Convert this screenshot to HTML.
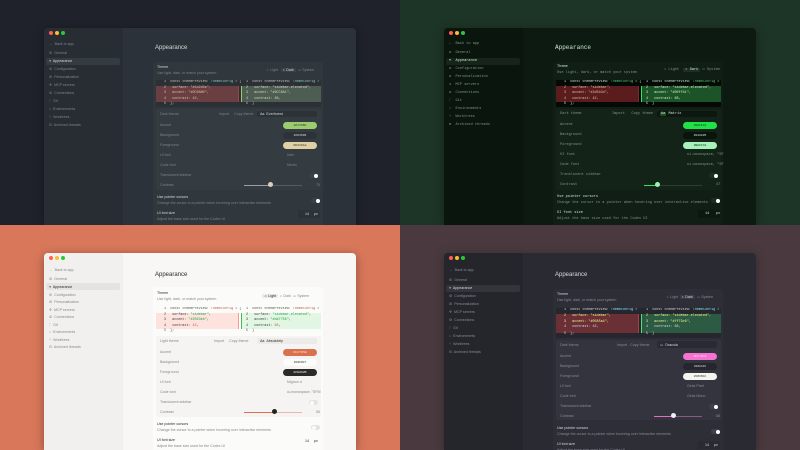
<!DOCTYPE html>
<html><head><meta charset="utf-8"><style>
*{margin:0;padding:0;box-sizing:border-box}
html,body{width:800px;height:450px;overflow:hidden}
body{font-family:"Liberation Sans",sans-serif;position:relative}
.q{position:absolute;width:400px;height:225px;overflow:hidden}
.w{position:absolute;left:44px;top:28px;width:312px;height:197px;border-radius:4px 4px 0 0;background:var(--main);box-shadow:0 2px 10px rgba(0,0,0,.35);overflow:hidden;color:var(--tx);font-size:3.6px}
.sb{position:absolute;left:0;top:0;width:79px;height:100%;background:var(--side)}
.dot{position:absolute;top:3px;width:4px;height:4px;border-radius:50%}
.t{position:absolute;white-space:nowrap;line-height:5px}
.m{color:var(--mu)}
.act{position:absolute;left:2px;top:30px;width:74px;height:7px;border-radius:2px;background:var(--act)}
.card{position:absolute;left:109px;top:34px;width:170px;height:200px;border-radius:3px;background:var(--card)}
.diff{position:absolute;left:112px;top:52px;width:165px;height:27px;background:var(--code);font-family:"Liberation Mono",monospace;font-size:3.4px;overflow:hidden}
.red{position:absolute;left:0;top:5.5px;width:83px;height:16px;background:var(--red);border-right:1px solid var(--redb)}
.grn{position:absolute;left:85px;top:5.5px;width:80px;height:16px;background:var(--grn);border-left:1px solid var(--grnb)}
.inner{position:absolute;left:112px;top:81px;width:165px;height:81px;border-radius:2px;background:var(--inner)}
.sw{position:absolute;left:239px;width:34px;height:7px;border-radius:3.5px;font-size:3px;text-align:center;line-height:7px}
.sel{position:absolute;left:213px;top:83px;width:60px;height:6px;border-radius:2px;background:var(--selbg)}
.tg{position:absolute;width:9px;height:5px;border-radius:3px;background:var(--tgbg)}
.tg i{position:absolute;right:.5px;top:.5px;width:4px;height:4px;border-radius:50%;background:var(--knob)}
.sl{position:absolute;left:200px;top:156.5px;width:58px;height:1px;background:var(--slbg)}
.sl i{position:absolute;left:0;top:0;height:1px;width:var(--slw);background:var(--slf)}
.sl b{position:absolute;left:var(--slw);top:-2.5px;width:5px;height:5px;border-radius:50%;background:var(--knob2);margin-left:-2.5px}
.inp{position:absolute;left:254px;top:182px;width:22px;height:8px;border-radius:2px;background:var(--selbg)}
</style></head><body>

<!-- TL -->
<div class="q" style="left:0;top:0;background:#1f222a;--main:#2c3239;--side:#282d33;--tx:#d6d8d4;--mu:#7d8488;--act:#343b41;--card:#30373d;--code:#2a3035;--red:#6a3f42;--redb:#8a4a4e;--grn:#4d5d52;--grnb:#9ccc70;--inner:#343b41;--selbg:#2c3237;--tgbg:#3a4147;--knob:#fff;--knob2:#d8d2b8;--slbg:#555c60;--slf:#9aa0a0;--slw:26px">
<div class="w">
<div class="sb"></div>
<div class="dot" style="left:5px;background:#ff5f57"></div><div class="dot" style="left:11px;background:#febc2e"></div><div class="dot" style="left:17px;background:#28c840"></div>
<div class="act"></div>
<div class="t m" style="left:5px;top:13.5px">←&nbsp; Back to app</div>
<div class="t m" style="left:5px;top:22.5px">⚙&nbsp; General</div>
<div class="t" style="left:5px;top:30.5px">≡&nbsp; Appearance</div>
<div class="t m" style="left:5px;top:38.5px">⚙&nbsp; Configuration</div>
<div class="t m" style="left:5px;top:46.5px">⚙&nbsp; Personalization</div>
<div class="t m" style="left:5px;top:54.5px">✣&nbsp; MCP servers</div>
<div class="t m" style="left:5px;top:62.5px">⚙&nbsp; Connections</div>
<div class="t m" style="left:5px;top:70.5px">ᚴ&nbsp; Git</div>
<div class="t m" style="left:5px;top:78.5px">○&nbsp; Environments</div>
<div class="t m" style="left:5px;top:86.5px">⑂&nbsp; Worktrees</div>
<div class="t m" style="left:5px;top:94.5px">⊟&nbsp; Archived threads</div>
<div class="t" style="left:111px;top:16px;font-size:6px;line-height:8px">Appearance</div>
<div class="card"></div>
<div class="t" style="left:113px;top:36.5px">Theme</div>
<div class="t m" style="left:113px;top:42.5px">Use light, dark, or match your system</div>
<div class="t m" style="left:222px;top:39.5px">☼ Light &nbsp;&nbsp;<span style="color:#d6d8d4;background:#3a4147;padding:0 2px">◐ Dark</span> &nbsp;▭ System</div>
<div class="diff"><div class="red"></div><div class="grn"></div>
<div class="t" style="left:8px;top:0;color:#c9c3b0">1 &nbsp;const themePreview: <span style="color:#8fc9b8">ThemeConfig</span> = {</div>
<div class="t" style="left:8px;top:5.5px;color:#d8c0a0">2 &nbsp;&nbsp;surface: "#1d2d3e",</div>
<div class="t" style="left:8px;top:11px;color:#d8c0a0">3 &nbsp;&nbsp;accent: "#0C6AB0",</div>
<div class="t" style="left:8px;top:16.5px;color:#d8c0a0">4 &nbsp;&nbsp;contrast: 42,</div>
<div class="t" style="left:8px;top:22px;color:#c9c3b0">5 &nbsp;};</div>
<div class="t" style="left:90px;top:0;color:#c9c3b0">1 &nbsp;const themePreview: <span style="color:#8fc9b8">ThemeConfig</span> = {</div>
<div class="t" style="left:90px;top:5.5px;color:#d8d6c0">2 &nbsp;&nbsp;surface: "sidebar-elevated",</div>
<div class="t" style="left:90px;top:11px;color:#d8d6c0">3 &nbsp;&nbsp;accent: "#9CC6A1",</div>
<div class="t" style="left:90px;top:16.5px;color:#d8d6c0">4 &nbsp;&nbsp;contrast: 68,</div>
<div class="t" style="left:90px;top:22px;color:#c9c3b0">5 &nbsp;}</div>
</div>
<div class="inner"></div>
<div class="sel"></div>
<div class="t m" style="left:116px;top:83.5px">Dark theme</div>
<div class="t m" style="left:175px;top:83.5px">Import &nbsp;&nbsp;&nbsp; Copy theme</div>
<div class="t" style="left:216px;top:83.5px">Aa &nbsp;Everforest</div>
<div class="t m" style="left:116px;top:94.5px">Accent</div><div class="sw" style="top:94px;background:#9ccc70;color:#2c3a20">#A7C080</div>
<div class="t m" style="left:116px;top:104.5px">Background</div><div class="sw" style="top:104px;background:#2c3237;color:#d6d8d4">#2D353B</div>
<div class="t m" style="left:116px;top:114.5px">Foreground</div><div class="sw" style="top:114px;background:#e0d0a6;color:#3a3428">#D3C6AA</div>
<div class="t m" style="left:116px;top:124.5px">UI font</div><div class="t m" style="left:243px;top:124.5px">Inter</div>
<div class="t m" style="left:116px;top:134.5px">Code font</div><div class="t m" style="left:243px;top:134.5px">Menlo</div>
<div class="t m" style="left:116px;top:144.5px">Translucent sidebar</div><div class="tg" style="left:265px;top:145px"><i></i></div>
<div class="t m" style="left:116px;top:154.5px">Contrast</div><div class="sl"><i></i><b></b></div><div class="t m" style="left:272px;top:154.5px">75</div>
<div class="t" style="left:113px;top:166.5px">Use pointer cursors</div>
<div class="t m" style="left:113px;top:172.5px">Change the cursor to a pointer when hovering over interactive elements</div>
<div class="tg" style="left:267px;top:170px"><i></i></div>
<div class="t" style="left:113px;top:182.5px">UI font size</div>
<div class="t m" style="left:113px;top:188.5px">Adjust the base size used for the Codex UI</div>
<div class="inp"></div><div class="t" style="left:261px;top:183.5px">14 &nbsp;&nbsp;&nbsp; px</div>
</div></div>

<!-- TR -->
<div class="q" style="left:400px;top:0;background:#1d3526;--main:#0d1a11;--side:#0a150d;--tx:#c8e8cc;--mu:#7a9a80;--act:#16241a;--card:#111e15;--code:#050a06;--red:#5a1c1c;--redb:#7a2a2a;--grn:#1c5428;--grnb:#2ee860;--inner:#142318;--selbg:#0c1710;--tgbg:#1d2e22;--knob:#fff;--knob2:#9ef0b0;--slbg:#2a4030;--slf:#2ee860;--slw:13px;font-family:'Liberation Mono',monospace">
<div class="w" style="font-family:'Liberation Mono',monospace">
<div class="sb"></div>
<div class="dot" style="left:5px;background:#ff5f57"></div><div class="dot" style="left:11px;background:#febc2e"></div><div class="dot" style="left:17px;background:#28c840"></div>
<div class="act"></div>
<div class="t m" style="left:5px;top:13.5px">←&nbsp; Back to app</div>
<div class="t m" style="left:5px;top:22.5px">⚙&nbsp; General</div>
<div class="t" style="left:5px;top:30.5px">≡&nbsp; Appearance</div>
<div class="t m" style="left:5px;top:38.5px">⚙&nbsp; Configuration</div>
<div class="t m" style="left:5px;top:46.5px">⚙&nbsp; Personalization</div>
<div class="t m" style="left:5px;top:54.5px">✣&nbsp; MCP servers</div>
<div class="t m" style="left:5px;top:62.5px">⚙&nbsp; Connections</div>
<div class="t m" style="left:5px;top:70.5px">ᚴ&nbsp; Git</div>
<div class="t m" style="left:5px;top:78.5px">○&nbsp; Environments</div>
<div class="t m" style="left:5px;top:86.5px">⑂&nbsp; Worktrees</div>
<div class="t m" style="left:5px;top:94.5px">⊟&nbsp; Archived threads</div>
<div class="t" style="left:111px;top:16px;font-size:6px;line-height:8px">Appearance</div>
<div class="card"></div>
<div class="t" style="left:113px;top:36.5px">Theme</div>
<div class="t m" style="left:113px;top:42.5px">Use light, dark, or match your system</div>
<div class="t m" style="left:220px;top:39.5px">☼ Light &nbsp;<span style="color:#c8e8cc;background:#1d2e22;padding:0 2px">◐ Dark</span> ▭ System</div>
<div class="diff"><div class="red"></div><div class="grn"></div>
<div class="t" style="left:8px;top:0;color:#c8e8cc">1 &nbsp;const themePreview: <span style="color:#5ad070">ThemeConfig</span> = {</div>
<div class="t" style="left:8px;top:5.5px;color:#e0c0a0">2 &nbsp;&nbsp;surface: "sidebar",</div>
<div class="t" style="left:8px;top:11px;color:#e0c0a0">3 &nbsp;&nbsp;accent: "#2d5b3d",</div>
<div class="t" style="left:8px;top:16.5px;color:#e0c0a0">4 &nbsp;&nbsp;contrast: 42,</div>
<div class="t" style="left:8px;top:22px;color:#c8e8cc">5 &nbsp;};</div>
<div class="t" style="left:90px;top:0;color:#c8e8cc">1 &nbsp;const themePreview: <span style="color:#5ad070">ThemeConfig</span> = {</div>
<div class="t" style="left:90px;top:5.5px;color:#d0f0d0">2 &nbsp;&nbsp;surface: "sidebar-elevated",</div>
<div class="t" style="left:90px;top:11px;color:#d0f0d0">3 &nbsp;&nbsp;accent: "#00ff41",</div>
<div class="t" style="left:90px;top:16.5px;color:#d0f0d0">4 &nbsp;&nbsp;contrast: 68,</div>
<div class="t" style="left:90px;top:22px;color:#c8e8cc">5 &nbsp;}</div>
</div>
<div class="inner"></div>
<div class="sel"></div>
<div class="t m" style="left:116px;top:83.5px">Dark theme</div>
<div class="t m" style="left:168px;top:83.5px">Import &nbsp;&nbsp;Copy theme</div>
<div class="t" style="left:216px;top:83.5px"><span style="background:#1d4a28;padding:0 1px">Aa</span> Matrix</div>
<div class="t m" style="left:116px;top:94.5px">Accent</div><div class="sw" style="top:94px;background:#22e04a;color:#064012">#00FF41</div>
<div class="t m" style="left:116px;top:104.5px">Background</div><div class="sw" style="top:104px;background:#0a140c;color:#c8e8cc">#040805</div>
<div class="t m" style="left:116px;top:114.5px">Foreground</div><div class="sw" style="top:114px;background:#a8f0bc;color:#0a3016">#B8FFC8</div>
<div class="t m" style="left:116px;top:124.5px">UI font</div><div class="t m" style="left:243px;top:124.5px">ui-monospace, "SF</div>
<div class="t m" style="left:116px;top:134.5px">Code font</div><div class="t m" style="left:243px;top:134.5px">ui-monospace, "SF</div>
<div class="t m" style="left:116px;top:144.5px">Translucent sidebar</div><div class="tg" style="left:265px;top:145px"><i></i></div>
<div class="t m" style="left:116px;top:154.5px">Contrast</div><div class="sl"><i></i><b></b></div><div class="t m" style="left:272px;top:154.5px">47</div>
<div class="t" style="left:113px;top:166.5px">Use pointer cursors</div>
<div class="t m" style="left:113px;top:172.5px">Change the cursor to a pointer when hovering over interactive elements</div>
<div class="tg" style="left:267px;top:170px"><i></i></div>
<div class="t" style="left:113px;top:182.5px">UI font size</div>
<div class="t m" style="left:113px;top:188.5px">Adjust the base size used for the Codex UI</div>
<div class="inp"></div><div class="t" style="left:261px;top:183.5px">14 &nbsp;&nbsp;px</div>
</div></div>

<!-- BL -->
<div class="q" style="left:0;top:225px;background:#d9775a;--main:#f8f7f5;--side:#f1f0ee;--tx:#2a2a2a;--mu:#8a8784;--act:#e4e3e1;--card:#fbfbfa;--code:#fbfbfa;--red:#fde2dd;--redb:#f0a090;--grn:#e2f6e4;--grnb:#40b860;--inner:#f5f4f2;--selbg:#ecebe9;--tgbg:#e4e3e1;--knob:#fbfbfa;--knob2:#222;--slbg:#e8b8a8;--slf:#d9714f;--slw:30px">
<div class="w">
<div class="sb"></div>
<div class="dot" style="left:5px;background:#ff5f57"></div><div class="dot" style="left:11px;background:#febc2e"></div><div class="dot" style="left:17px;background:#28c840"></div>
<div class="act"></div>
<div class="t m" style="left:5px;top:15px">←&nbsp; Back to app</div>
<div class="t m" style="left:5px;top:24px">⚙&nbsp; General</div>
<div class="t" style="left:5px;top:32px">≡&nbsp; Appearance</div>
<div class="t m" style="left:5px;top:39.5px">⚙&nbsp; Configuration</div>
<div class="t m" style="left:5px;top:47px">⚙&nbsp; Personalization</div>
<div class="t m" style="left:5px;top:54.5px">✣&nbsp; MCP servers</div>
<div class="t m" style="left:5px;top:62px">⚙&nbsp; Connections</div>
<div class="t m" style="left:5px;top:69.5px">ᚴ&nbsp; Git</div>
<div class="t m" style="left:5px;top:77px">○&nbsp; Environments</div>
<div class="t m" style="left:5px;top:84.5px">⑂&nbsp; Worktrees</div>
<div class="t m" style="left:5px;top:92px">⊟&nbsp; Archived threads</div>
<div class="t" style="left:111px;top:18px;font-size:6px;line-height:8px">Appearance</div>
<div class="card"></div>
<div class="t" style="left:113px;top:38px">Theme</div>
<div class="t m" style="left:113px;top:44px">Use light, dark, or match your system</div>
<div class="t m" style="left:218px;top:41px"><span style="color:#2a2a2a;background:#ecebe9;padding:0 2px">☼ Light</span> &nbsp;◐ Dark &nbsp;▭ System</div>
<div class="diff" style="top:54px"><div class="red"></div><div class="grn"></div>
<div class="t" style="left:8px;top:0;color:#555">1 &nbsp;const themePreview: <span style="color:#c06048">ThemeConfig</span> = {</div>
<div class="t" style="left:8px;top:5.5px;color:#3a3a3a">2 &nbsp;&nbsp;surface: <span style="color:#20a040">"sidebar"</span>,</div>
<div class="t" style="left:8px;top:11px;color:#3a3a3a">3 &nbsp;&nbsp;accent: <span style="color:#20a040">"#2563eb"</span>,</div>
<div class="t" style="left:8px;top:16.5px;color:#3a3a3a">4 &nbsp;&nbsp;contrast: <span style="color:#d06040">42</span>,</div>
<div class="t" style="left:8px;top:22px;color:#555">5 &nbsp;};</div>
<div class="t" style="left:90px;top:0;color:#555">1 &nbsp;const themePreview: <span style="color:#c06048">ThemeConfig</span> = {</div>
<div class="t" style="left:90px;top:5.5px;color:#3a3a3a">2 &nbsp;&nbsp;surface: <span style="color:#20a040">"sidebar-elevated"</span>,</div>
<div class="t" style="left:90px;top:11px;color:#3a3a3a">3 &nbsp;&nbsp;accent: <span style="color:#20a040">"#da7756"</span>,</div>
<div class="t" style="left:90px;top:16.5px;color:#3a3a3a">4 &nbsp;&nbsp;contrast: <span style="color:#d06040">68</span>,</div>
<div class="t" style="left:90px;top:22px;color:#555">5 &nbsp;}</div>
</div>
<div class="inner" style="top:83px"></div>
<div class="sel" style="top:85px"></div>
<div class="t m" style="left:116px;top:85.5px">Light theme</div>
<div class="t m" style="left:170px;top:85.5px">Import &nbsp;&nbsp;&nbsp; Copy theme</div>
<div class="t" style="left:216px;top:85.5px">Aa &nbsp;Absolutely</div>
<div class="t m" style="left:116px;top:96.5px">Accent</div><div class="sw" style="top:96px;background:#d9714f;color:#fde0d4">#CC7D5E</div>
<div class="t m" style="left:116px;top:106.5px">Background</div><div class="sw" style="top:106px;background:#fbfbfa;color:#2a2a2a">#F9F9F7</div>
<div class="t m" style="left:116px;top:116.5px">Foreground</div><div class="sw" style="top:116px;background:#2a2a2a;color:#f0f0f0">#2D2D2B</div>
<div class="t m" style="left:116px;top:126.5px">UI font</div><div class="t m" style="left:243px;top:126.5px">Mignon&nbsp;d</div>
<div class="t m" style="left:116px;top:136.5px">Code font</div><div class="t m" style="left:243px;top:136.5px">ui-monospace, "SFM</div>
<div class="t m" style="left:116px;top:146.5px">Translucent sidebar</div><div class="tg" style="left:265px;top:147px"><i style="left:.5px;right:auto"></i></div>
<div class="t m" style="left:116px;top:156.5px">Contrast</div><div class="sl" style="top:158.5px"><i></i><b></b></div><div class="t m" style="left:272px;top:156.5px">56</div>
<div class="t" style="left:113px;top:168.5px">Use pointer cursors</div>
<div class="t m" style="left:113px;top:174.5px">Change the cursor to a pointer when hovering over interactive elements</div>
<div class="tg" style="left:267px;top:172px"><i style="left:.5px;right:auto"></i></div>
<div class="t" style="left:113px;top:184.5px">UI font size</div>
<div class="t m" style="left:113px;top:190.5px">Adjust the base size used for the Codex UI</div>
<div class="t" style="left:261px;top:185.5px">14 &nbsp;&nbsp;&nbsp; px</div>
</div></div>

<!-- BR -->
<div class="q" style="left:400px;top:225px;background:#4a3a40;--main:#2a2a32;--side:#25252c;--tx:#d8d8e0;--mu:#8a8a96;--act:#34343d;--card:#2e2e37;--code:#26262e;--red:#6a3036;--redb:#a04048;--grn:#2d5a42;--grnb:#50e080;--inner:#34343e;--selbg:#2a2a32;--tgbg:#40404a;--knob:#fff;--knob2:#f0f0f0;--slbg:#8a5a80;--slf:#e070c0;--slw:19px">
<div class="w">
<div class="sb"></div>
<div class="dot" style="left:5px;background:#ff5f57"></div><div class="dot" style="left:11px;background:#febc2e"></div><div class="dot" style="left:17px;background:#28c840"></div>
<div class="act" style="top:32px"></div>
<div class="t m" style="left:5px;top:15px">←&nbsp; Back to app</div>
<div class="t m" style="left:5px;top:25px">⚙&nbsp; General</div>
<div class="t" style="left:5px;top:33px">≡&nbsp; Appearance</div>
<div class="t m" style="left:5px;top:41px">⚙&nbsp; Configuration</div>
<div class="t m" style="left:5px;top:49px">⚙&nbsp; Personalization</div>
<div class="t m" style="left:5px;top:57px">✣&nbsp; MCP servers</div>
<div class="t m" style="left:5px;top:65px">⚙&nbsp; Connections</div>
<div class="t m" style="left:5px;top:73px">ᚴ&nbsp; Git</div>
<div class="t m" style="left:5px;top:81px">○&nbsp; Environments</div>
<div class="t m" style="left:5px;top:89px">⑂&nbsp; Worktrees</div>
<div class="t m" style="left:5px;top:97px">⊟&nbsp; Archived threads</div>
<div class="t" style="left:111px;top:18px;font-size:6px;line-height:8px">Appearance</div>
<div class="card" style="top:36px"></div>
<div class="t" style="left:113px;top:39px">Theme</div>
<div class="t m" style="left:113px;top:45px">Use light, dark, or match your system</div>
<div class="t m" style="left:222px;top:42px">☼ Light &nbsp;<span style="color:#d8d8e0;background:#3a3a44;padding:0 2px">◐ Dark</span> &nbsp;▭ System</div>
<div class="diff" style="top:55px;height:30px"><div class="red" style="height:19px"></div><div class="grn" style="height:19px"></div>
<div class="t" style="left:8px;top:0;color:#d8d8e0">1 &nbsp;const themePreview: <span style="color:#8be9fd">ThemeConfig</span> =</div>
<div class="t" style="left:8px;top:6px;color:#f1fa8c">2 &nbsp;&nbsp;surface: "sidebar",</div>
<div class="t" style="left:8px;top:11.5px;color:#f1fa8c">3 &nbsp;&nbsp;accent: "#0585a4",</div>
<div class="t" style="left:8px;top:17px;color:#d8d8e0">4 &nbsp;&nbsp;contrast: 42,</div>
<div class="t" style="left:8px;top:23.5px;color:#d8d8e0">5 &nbsp;};</div>
<div class="t" style="left:90px;top:0;color:#d8d8e0">1 &nbsp;const themePreview: <span style="color:#8be9fd">ThemeConfig</span> =</div>
<div class="t" style="left:90px;top:6px;color:#f1fa8c">2 &nbsp;&nbsp;surface: "sidebar-elevated",</div>
<div class="t" style="left:90px;top:11.5px;color:#f1fa8c">3 &nbsp;&nbsp;accent: "#ff79c6",</div>
<div class="t" style="left:90px;top:17px;color:#d8d8e0">4 &nbsp;&nbsp;contrast: 68,</div>
<div class="t" style="left:90px;top:23.5px;color:#d8d8e0">5 &nbsp;}</div>
</div>
<div class="inner" style="top:87px;height:80px"></div>
<div class="sel" style="top:88px;height:7px"></div>
<div class="t m" style="left:116px;top:89.5px">Dark theme</div>
<div class="t m" style="left:173px;top:89.5px">Import &nbsp;&nbsp;Copy theme</div>
<div class="t" style="left:216px;top:89.5px">▭ &nbsp;Dracula</div>
<div class="t m" style="left:116px;top:100.5px">Accent</div><div class="sw" style="top:100px;background:#f472d0;color:#fde0f4">#FF79C6</div>
<div class="t m" style="left:116px;top:110.5px">Background</div><div class="sw" style="top:110px;background:#26262e;color:#d8d8e0">#282A36</div>
<div class="t m" style="left:116px;top:120.5px">Foreground</div><div class="sw" style="top:120px;background:#f4f4f0;color:#333">#F8F8F2</div>
<div class="t m" style="left:116px;top:130.5px">UI font</div><div class="t m" style="left:243px;top:130.5px">Geist Pixel</div>
<div class="t m" style="left:116px;top:140.5px">Code font</div><div class="t m" style="left:243px;top:140.5px">Geist Mono</div>
<div class="t m" style="left:116px;top:150.5px">Translucent sidebar</div><div class="tg" style="left:265px;top:151px"><i></i></div>
<div class="t m" style="left:116px;top:160.5px">Contrast</div><div class="sl" style="left:210px;top:162.5px;width:48px"><i></i><b></b></div><div class="t m" style="left:272px;top:160.5px">68</div>
<div class="t" style="left:113px;top:172.5px">Use pointer cursors</div>
<div class="t m" style="left:113px;top:178.5px">Change the cursor to a pointer when hovering over interactive elements</div>
<div class="tg" style="left:267px;top:176px"><i></i></div>
<div class="t" style="left:113px;top:188.5px">UI font size</div>
<div class="t m" style="left:113px;top:194.5px">Adjust the base size used for the Codex UI</div>
<div class="inp" style="top:188px"></div><div class="t" style="left:261px;top:189.5px">14 &nbsp;&nbsp;&nbsp; px</div>
</div></div>

</body></html>
